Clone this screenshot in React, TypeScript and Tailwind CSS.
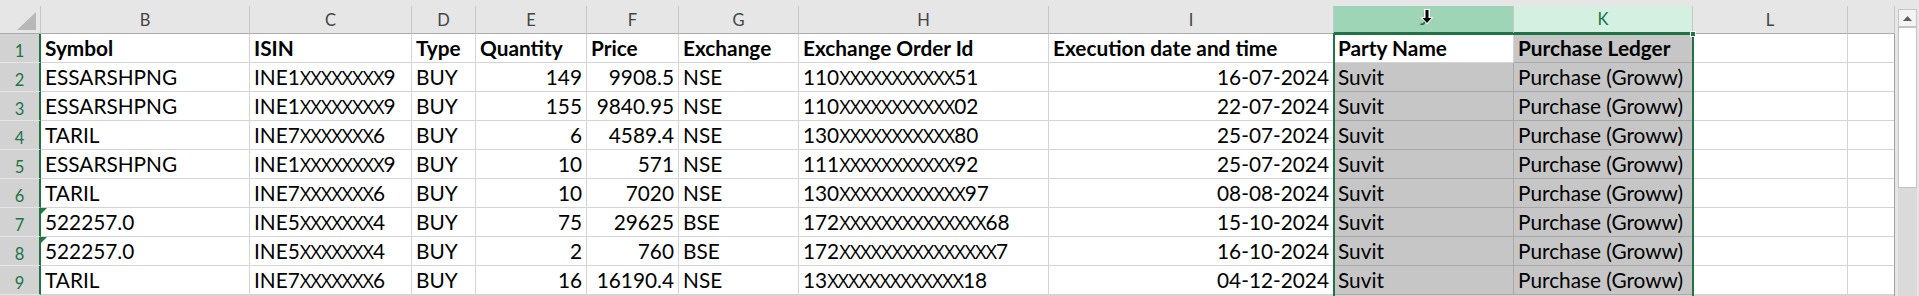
const cols = [
  { l: "B", w: "w-[209px]" },
  { l: "C", w: "w-[162px]" },
  { l: "D", w: "w-[64px]" },
  { l: "E", w: "w-[111px]" },
  { l: "F", w: "w-[92px]" },
  { l: "G", w: "w-[120px]" },
  { l: "H", w: "w-[250px]" },
  { l: "I", w: "w-[285px]" },
  { l: "J", w: "w-[180px]" },
  { l: "K", w: "w-[179px]" },
  { l: "L", w: "w-[155px]" },
  { l: "", w: "w-[47px]" },
];

const X = (n: number) => "X".repeat(n);

const header = [
  "Symbol",
  "ISIN",
  "Type",
  "Quantity",
  "Price",
  "Exchange",
  "Exchange Order Id",
  "Execution date and time",
  "Party Name",
  "Purchase Ledger",
  "",
  "",
];

const data: string[][] = [
  ["ESSARSHPNG", "INE1" + X(8) + "9", "BUY", "149", "9908.5", "NSE", "110" + X(11) + "51", "16-07-2024"],
  ["ESSARSHPNG", "INE1" + X(8) + "9", "BUY", "155", "9840.95", "NSE", "110" + X(11) + "02", "22-07-2024"],
  ["TARIL", "INE7" + X(7) + "6", "BUY", "6", "4589.4", "NSE", "130" + X(11) + "80", "25-07-2024"],
  ["ESSARSHPNG", "INE1" + X(8) + "9", "BUY", "10", "571", "NSE", "111" + X(11) + "92", "25-07-2024"],
  ["TARIL", "INE7" + X(7) + "6", "BUY", "10", "7020", "NSE", "130" + X(12) + "97", "08-08-2024"],
  ["522257.0", "INE5" + X(7) + "4", "BUY", "75", "29625", "BSE", "172" + X(14) + "68", "15-10-2024"],
  ["522257.0", "INE5" + X(7) + "4", "BUY", "2", "760", "BSE", "172" + X(15) + "7", "16-10-2024"],
  ["TARIL", "INE7" + X(7) + "6", "BUY", "16", "16190.4", "NSE", "13" + X(13) + "18", "04-12-2024"],
].map((r) => [...r, "Suvit", "Purchase (Groww)", "", ""]);

// right aligned: Quantity, Price, Execution date
const rightCols = new Set([3, 4, 7]);

// masked ids: Lato's X is much wider than Calibri's, so the X runs use Open Sans
function Masked({ text }: { text: string }) {
  return (
    <>
      {text.split(/(X+)/).map((part, i) =>
        part.startsWith("X") ? (
          <span key={i} className="font-['Open_Sans',_sans-serif] text-[20px] tracking-[-1.1px]">
            {part}
          </span>
        ) : (
          <span key={i}>{part}</span>
        )
      )}
    </>
  );
}

function ColHeader({ l, w }: { l: string; w: string }) {
  let cls = "bg-[#e6e6e6] border-b border-b-[#ababab] text-[#444]";
  if (l === "J") cls = "bg-[#9fd5b7] border-b-2 border-b-[#217346] text-[#1d6b40]";
  if (l === "K") cls = "bg-[#d3f0e0] border-b-2 border-b-[#217346] text-[#217346]";
  return (
    <div className={`${w} ${cls} relative flex h-full shrink-0 items-center justify-center border-r border-r-[#c8c8c8] pt-[1px] text-[16.5px]`}>
      {l}
      {l === "J" && (
        <svg className="absolute left-[86px] top-[2px]" width="14" height="18" viewBox="0 0 14 18">
          <path d="M4 1 H10 V9 H13.5 L7 16.5 L0.5 9 H4 Z" fill="#fff" />
          <path d="M5.5 2 H8.5 V10 H11.5 L7 15 L2.5 10 H5.5 Z" fill="#000" />
        </svg>
      )}
    </div>
  );
}

function Cell({ w, text, col, row }: { w: string; text: string; col: number; row: number }) {
  const selected = (col === 8 || col === 9) && !(col === 8 && row === 0);
  const right = row > 0 && rightCols.has(col);
  const masked = row > 0 && (col === 1 || col === 6);
  return (
    <div
      className={`${w} relative flex h-full shrink-0 items-end overflow-hidden whitespace-nowrap border-r border-b px-[4px] pb-[3px] leading-none ${
        selected ? "border-[#a9a9a9] bg-[#c6c6c6]" : "border-[#d4d4d4] bg-white"
      } ${right ? "justify-end" : "justify-start"} ${row === 0 ? "font-bold" : ""}`}
    >
      {col === 0 && (row === 6 || row === 7) && (
        <svg className="absolute left-0 top-0" width="6" height="6" viewBox="0 0 6 6">
          <polygon points="0,0 6,0 0,6" fill="#1f7a3c" />
        </svg>
      )}
      {masked ? <Masked text={text} /> : text}
    </div>
  );
}

export default function App() {
  const rows = [header, ...data];
  return (
    <div className="flex h-[296px] w-[1919px] overflow-hidden bg-[#e6e6e6] font-['Lato',_sans-serif] text-[20.8px] text-black">
      <div className="relative flex w-[1895px] shrink-0 flex-col overflow-hidden">
        <div className="h-[6px] shrink-0" />
        <div className="flex h-[28px] shrink-0">
          <div className="relative h-full w-[41px] shrink-0 border-r border-b border-r-[#c8c8c8] border-b-[#ababab] bg-[#e6e6e6]">
            <svg className="absolute left-0 top-0" width="41" height="28" viewBox="0 0 41 28">
              <polygon points="17,24 36,6 36,24" fill="#b8b8b8" />
            </svg>
          </div>
          {cols.map((c, i) => (
            <ColHeader key={i} l={c.l} w={c.w} />
          ))}
        </div>
        {rows.map((r, ri) => (
          <div key={ri} className="flex h-[29px] shrink-0">
            <div className="flex h-full w-[41px] shrink-0 items-end justify-center border-r-2 border-b border-r-[#217346] border-b-[#e4e4e4] bg-[#d2d2d2] pb-[3px] text-[16.5px] leading-none text-[#217346]">
              {ri + 1}
            </div>
            {cols.map((c, ci) => (
              <Cell key={ci} w={c.w} text={r[ci]} col={ci} row={ri} />
            ))}
          </div>
        ))}
        <div className="h-px shrink-0 bg-[#d4d4d4]" />
        {/* selection outline J1:K9 */}
        <div className="absolute left-[1333px] top-[33px] h-[300px] w-[361px] border-2 border-[#217346]" />
        <div className="absolute left-[1690px] top-[31px] h-[6px] w-[6px] border border-white bg-[#217346]" />
        <div className="absolute right-0 top-[34px] h-[262px] w-px bg-[#a0a0a0]" />
      </div>
      <div className="flex w-[24px] shrink-0 flex-col pl-[3px] pr-[2px] pt-[9px]">
        <div className="flex h-[18px] shrink-0 items-center justify-center border border-[#c6c6c6] bg-[#f4f4f4]">
          <svg width="9" height="5" viewBox="0 0 9 5">
            <polygon points="0,5 4.5,0 9,5" fill="#606060" />
          </svg>
        </div>
        <div className="flex flex-1 flex-col bg-[#dadada]">
          <div className="h-[161px] border border-[#c2c2c2] bg-white" />
        </div>
      </div>
    </div>
  );
}
